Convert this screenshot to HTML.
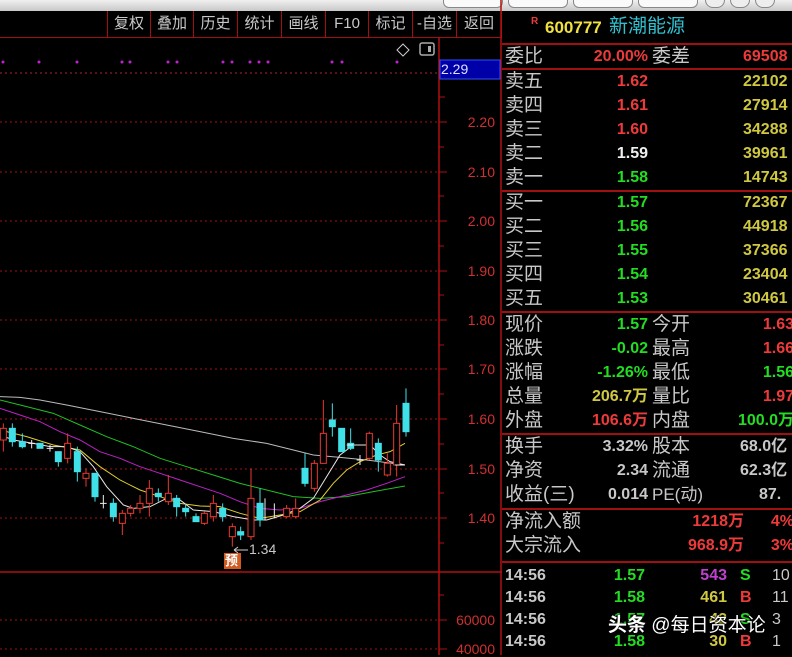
<!DOCTYPE html>
<html><head><meta charset="utf-8"><style>
*{margin:0;padding:0;box-sizing:border-box}
body{width:792px;height:655px;background:#000;position:relative;overflow:hidden;font-family:"Liberation Sans","Noto Sans CJK SC",sans-serif}
.a{position:absolute;white-space:nowrap}
.tb{position:absolute;top:11px;height:26px;border-left:1px solid #a01010;color:#c8c8c8;font-size:15px;line-height:26px;text-align:center}
.l{position:absolute;left:505px;color:#c8c8c8;font-size:19px;line-height:22px}
.l2{position:absolute;left:652px;color:#c8c8c8;font-size:19px;line-height:22px}
.v{position:absolute;font-weight:bold;font-size:16px;line-height:22px;text-align:right}
.hl{position:absolute;left:502px;width:290px;height:2px;background:#a01010}
.r{color:#ee3a3a}.g{color:#22dd22}.y{color:#d0c840}.w{color:#f0f0f0}.s{color:#c8c8c8}.m{color:#c040d0}
.ax{position:absolute;right:297px;color:#d03030;font-size:14px;text-align:right;width:50px}
</style></head><body>
<!-- top gray strip -->
<div class="a" style="left:0;top:0;width:792px;height:11px;background:linear-gradient(#f0f0f0,#c8c8c8)"></div>
<div class="a" style="left:443px;top:-8px;width:60px;height:16px;border:1px solid #888;border-radius:6px;background:#fafafa"></div>
<div class="a" style="left:508px;top:-8px;width:60px;height:16px;border:1px solid #888;border-radius:6px;background:#fafafa"></div>
<div class="a" style="left:573px;top:-8px;width:60px;height:16px;border:1px solid #888;border-radius:6px;background:#fafafa"></div>
<div class="a" style="left:638px;top:-8px;width:60px;height:16px;border:1px solid #888;border-radius:6px;background:#fafafa"></div>
<div class="a" style="left:705px;top:-8px;width:20px;height:16px;border:1px solid #888;border-radius:8px;background:#eee"></div>
<div class="a" style="left:730px;top:-8px;width:20px;height:16px;border:1px solid #888;border-radius:8px;background:#eee"></div>
<div class="a" style="left:755px;top:-8px;width:20px;height:16px;border:1px solid #888;border-radius:8px;background:#eee"></div>
<!-- toolbar -->
<div class="tb" style="left:107px;width:43px">复权</div>
<div class="tb" style="left:150px;width:43px">叠加</div>
<div class="tb" style="left:193px;width:44px">历史</div>
<div class="tb" style="left:237px;width:44px">统计</div>
<div class="tb" style="left:281px;width:44px">画线</div>
<div class="tb" style="left:325px;width:43px">F10</div>
<div class="tb" style="left:368px;width:44px">标记</div>
<div class="tb" style="left:412px;width:44px">-自选</div>
<div class="tb" style="left:456px;width:46px;border-right:1px solid #a01010">返回</div>
<div class="a" style="left:0;top:37px;width:502px;height:1px;background:#a01010"></div>
<!-- chart svg -->
<svg class="a" style="left:0;top:0" width="502" height="655">
<g fill="#c020d0"><circle cx="3" cy="62" r="1.5"/><circle cx="39" cy="62" r="1.5"/><circle cx="77" cy="62" r="1.5"/><circle cx="122" cy="62" r="1.5"/><circle cx="130" cy="62" r="1.5"/><circle cx="168" cy="62" r="1.5"/><circle cx="177" cy="62" r="1.5"/><circle cx="223" cy="62" r="1.5"/><circle cx="232" cy="62" r="1.5"/><circle cx="250" cy="62" r="1.5"/><circle cx="259" cy="62" r="1.5"/><circle cx="268" cy="62" r="1.5"/><circle cx="332" cy="62" r="1.5"/><circle cx="342" cy="62" r="1.5"/><circle cx="397" cy="62" r="1.5"/></g>
<path d="M403 44l6 6-6 6-6-6z" fill="none" stroke="#ccc"/>
<rect x="420" y="43" width="14" height="12" rx="2" fill="none" stroke="#aaa" stroke-width="1.5"/><rect x="428" y="46" width="3" height="6" fill="#aaa"/>
<g stroke-dasharray="2,3" stroke-width="1">
<line x1="0" y1="73" x2="438" y2="73" stroke="#b02040"/>
<line x1="0" y1="122" x2="438" y2="122" stroke="#a01010"/>
<line x1="0" y1="172" x2="438" y2="172" stroke="#a01010"/>
<line x1="0" y1="221" x2="438" y2="221" stroke="#a01010"/>
<line x1="0" y1="271" x2="438" y2="271" stroke="#a01010"/>
<line x1="0" y1="320" x2="438" y2="320" stroke="#a01010"/>
<line x1="0" y1="369" x2="438" y2="369" stroke="#a01010"/>
<line x1="0" y1="419" x2="438" y2="419" stroke="#a01010"/>
<line x1="0" y1="469" x2="438" y2="469" stroke="#a01010"/>
<line x1="0" y1="518" x2="438" y2="518" stroke="#a01010"/>
<line x1="0" y1="620" x2="438" y2="620" stroke="#a01010"/>
<line x1="0" y1="649" x2="438" y2="649" stroke="#a01010"/>
</g>
<line x1="439" y1="37" x2="439" y2="655" stroke="#b01010" stroke-width="1.5"/>
<line x1="0" y1="572" x2="502" y2="572" stroke="#b01010" stroke-width="1.5"/>
<line x1="501" y1="0" x2="501" y2="655" stroke="#b01010" stroke-width="1.5"/>
<g stroke="#b01010"><path d="M439 97h6M439 122h8M439 147h5M439 172h8M439 196h5M439 221h8M439 246h5M439 271h8M439 295h5M439 320h8M439 345h5M439 369h8M439 394h5M439 419h8M439 444h5M439 469h8M439 493h5M439 518h8M439 543h5M439 595h5M439 620h8M439 649h8"/></g>
<rect x="440" y="60" width="60" height="19" fill="#0000a8" stroke="#3050ff"/>
<g transform="translate(0,380) scale(0.33333)" stroke-width="3">
<g fill="none">
<polyline stroke="#bbbbbb" points="0,50 60,52 120,60 200,75 300,95 400,115 500,135 600,155 700,175 800,190 880,210 940,225 1020,232 1100,240 1215,255"/>
<polyline stroke="#20c020" points="0,60 80,80 160,100 240,135 320,170 400,200 480,235 560,260 640,285 720,310 800,330 880,350 960,355 1040,350 1120,335 1215,318"/>
<polyline stroke="#c020c8" points="0,85 60,105 120,125 180,155 240,180 300,215 360,235 420,260 480,280 540,300 600,320 660,340 720,365 780,385 840,390 900,385 960,365 1020,350 1100,330 1160,310 1215,290"/>
<polyline stroke="#e0d030" points="0,150 80,170 160,195 240,210 300,260 360,300 420,330 480,350 540,370 600,378 660,380 720,400 780,415 840,405 900,395 960,360 1000,310 1040,270 1080,245 1130,225 1170,215 1215,190"/>
<polyline stroke="#e8e8e8" points="0,165 40,180 100,190 150,200 200,200 240,215 280,260 320,320 370,375 400,385 450,380 500,355 540,360 580,390 640,395 700,410 760,420 800,420 850,405 900,385 940,355 980,290 1020,225 1060,195 1110,195 1140,225 1170,245 1215,255"/>
</g>
<!-- red candles (hollow) -->
<g stroke="#e83a30" fill="#000">
<path d="M10 130V215M203 160V250M258 265V320M367 390V465M392 375V410M420 345V400M448 300V410M505 285V375M613 395V435M640 345V425M697 430V500M753 265V480M860 375V415M887 355V415M943 240V335M970 60V250M1108 155V240M1162 220V290M1190 75V290"/>
<rect x="1" y="145" width="18" height="35"/><rect x="194" y="190" width="18" height="45"/><rect x="249" y="280" width="18" height="15"/><rect x="358" y="400" width="18" height="30"/><rect x="383" y="385" width="18" height="15"/><rect x="411" y="370" width="18" height="15"/><rect x="439" y="325" width="18" height="45"/><rect x="496" y="340" width="18" height="25"/><rect x="604" y="400" width="18" height="30"/><rect x="631" y="370" width="18" height="40"/><rect x="688" y="440" width="18" height="30"/><rect x="744" y="355" width="18" height="115"/><rect x="851" y="385" width="18" height="25"/><rect x="878" y="385" width="18" height="25"/><rect x="934" y="250" width="18" height="75"/><rect x="961" y="160" width="18" height="90"/><rect x="1099" y="160" width="18" height="75"/><rect x="1153" y="250" width="18" height="35"/><rect x="1181" y="130" width="18" height="125"/>
</g>
<!-- cyan candles -->
<g stroke="#40e0e8" fill="#40e0e8">
<path d="M37 130V200M67 160V205M175 215V260M232 200V305M285 280V365M340 355V425M475 325V365M530 345V410M557 375V410M588 400V425M668 370V425M722 440V480M780 325V440M915 220V320M997 70V170M1025 145V215M1052 145V210M1135 175V275M1218 25V170"/>
<rect x="28" y="145" width="18" height="40"/><rect x="58" y="185" width="18" height="15"/><rect x="111" y="190" width="18" height="15"/><rect x="166" y="215" width="18" height="30"/><rect x="223" y="215" width="18" height="60"/><rect x="276" y="280" width="18" height="70"/><rect x="331" y="370" width="18" height="40"/><rect x="466" y="340" width="18" height="10"/><rect x="521" y="355" width="18" height="25"/><rect x="548" y="385" width="18" height="10"/><rect x="579" y="410" width="18" height="15"/><rect x="659" y="385" width="18" height="25"/><rect x="713" y="455" width="18" height="10"/><rect x="771" y="370" width="18" height="50"/><rect x="906" y="265" width="18" height="45"/><rect x="988" y="120" width="18" height="20"/><rect x="1016" y="145" width="18" height="70"/><rect x="1043" y="190" width="18" height="15"/><rect x="1126" y="190" width="18" height="50"/><rect x="1209" y="70" width="18" height="85"/>
</g>
<g stroke="#eee"><path d="M85 190h20M95 180V205M140 205h20M150 195V215M300 370h20M310 345V385M795 355V420M823 370V415M1070 240h20M1080 225V255M1185 255h30M1040 195h20"/></g>
</g>
<path d="M234 550h14M234 550l4-3M234 550l4 3" stroke="#ccc" fill="none"/>
<rect x="224" y="553" width="17" height="16" fill="#d05a20"/>
</svg>
<div class="a" style="left:249px;top:541px;color:#c8c8c8;font-size:14px">1.34</div>
<div class="a" style="left:225px;top:553px;color:#fff;font-size:13px;line-height:16px;font-weight:bold">预</div>
<div class="a" style="left:441px;top:61px;color:#e0e0ff;font-size:14px">2.29</div>
<div class="ax" style="top:114px">2.20</div>
<div class="ax" style="top:164px">2.10</div>
<div class="ax" style="top:213px">2.00</div>
<div class="ax" style="top:263px">1.90</div>
<div class="ax" style="top:312px">1.80</div>
<div class="ax" style="top:361px">1.70</div>
<div class="ax" style="top:411px">1.60</div>
<div class="ax" style="top:461px">1.50</div>
<div class="ax" style="top:510px">1.40</div>
<div class="ax" style="top:612px;width:60px">60000</div>
<div class="ax" style="top:641px;width:60px">40000</div>
<!-- right panel -->
<div class="a" style="left:531px;top:16px;color:#ee3a3a;font-size:10px;font-weight:bold">R</div>
<div class="a" style="left:545px;top:16px;color:#f0e040;font-size:17px;font-weight:bold;line-height:24px">600777</div>
<div class="a" style="left:609px;top:15px;color:#30c0d0;font-size:19px;line-height:24px">新潮能源</div>
<div class="hl" style="top:43px"></div>
<div class="l" style="top:46px">委比</div><div class="v r" style="left:560px;top:46px;width:88px">20.00%</div>
<div class="l2" style="top:46px">委差</div><div class="v r" style="left:700px;top:46px;width:100px;text-align:left;padding-left:43px">69508</div>
<div class="hl" style="top:68px"></div>
<div class="l" style="top:71px">卖五</div><div class="v r" style="left:560px;top:71px;width:88px">1.62</div><div class="v y" style="left:743px;top:71px">22102</div>
<div class="l" style="top:95px">卖四</div><div class="v r" style="left:560px;top:95px;width:88px">1.61</div><div class="v y" style="left:743px;top:95px">27914</div>
<div class="l" style="top:119px">卖三</div><div class="v r" style="left:560px;top:119px;width:88px">1.60</div><div class="v y" style="left:743px;top:119px">34288</div>
<div class="l" style="top:143px">卖二</div><div class="v w" style="left:560px;top:143px;width:88px">1.59</div><div class="v y" style="left:743px;top:143px">39961</div>
<div class="l" style="top:167px">卖一</div><div class="v g" style="left:560px;top:167px;width:88px">1.58</div><div class="v y" style="left:743px;top:167px">14743</div>
<div class="hl" style="top:190px"></div>
<div class="l" style="top:192px">买一</div><div class="v g" style="left:560px;top:192px;width:88px">1.57</div><div class="v y" style="left:743px;top:192px">72367</div>
<div class="l" style="top:216px">买二</div><div class="v g" style="left:560px;top:216px;width:88px">1.56</div><div class="v y" style="left:743px;top:216px">44918</div>
<div class="l" style="top:240px">买三</div><div class="v g" style="left:560px;top:240px;width:88px">1.55</div><div class="v y" style="left:743px;top:240px">37366</div>
<div class="l" style="top:264px">买四</div><div class="v g" style="left:560px;top:264px;width:88px">1.54</div><div class="v y" style="left:743px;top:264px">23404</div>
<div class="l" style="top:288px">买五</div><div class="v g" style="left:560px;top:288px;width:88px">1.53</div><div class="v y" style="left:743px;top:288px">30461</div>
<div class="hl" style="top:311px"></div>
<div class="l" style="top:314px">现价</div><div class="v g" style="left:560px;top:314px;width:88px">1.57</div><div class="l2" style="top:314px">今开</div><div class="v r" style="left:740px;top:314px;width:54px">1.63</div>
<div class="l" style="top:338px">涨跌</div><div class="v g" style="left:560px;top:338px;width:88px">-0.02</div><div class="l2" style="top:338px">最高</div><div class="v r" style="left:740px;top:338px;width:54px">1.66</div>
<div class="l" style="top:362px">涨幅</div><div class="v g" style="left:560px;top:362px;width:88px">-1.26%</div><div class="l2" style="top:362px">最低</div><div class="v g" style="left:740px;top:362px;width:54px">1.56</div>
<div class="l" style="top:386px">总量</div><div class="v y" style="left:560px;top:386px;width:88px">206.7万</div><div class="l2" style="top:386px">量比</div><div class="v r" style="left:740px;top:386px;width:54px">1.97</div>
<div class="l" style="top:410px">外盘</div><div class="v r" style="left:560px;top:410px;width:88px">106.6万</div><div class="l2" style="top:410px">内盘</div><div class="v g" style="left:700px;top:410px;width:94px">100.0万</div>
<div class="hl" style="top:433px"></div>
<div class="l" style="top:436px">换手</div><div class="v s" style="left:560px;top:436px;width:88px">3.32%</div><div class="l2" style="top:436px">股本</div><div class="v s" style="left:700px;top:436px;width:100px;text-align:left;padding-left:40px">68.0亿</div>
<div class="l" style="top:460px">净资</div><div class="v s" style="left:560px;top:460px;width:88px">2.34</div><div class="l2" style="top:460px">流通</div><div class="v s" style="left:700px;top:460px;width:100px;text-align:left;padding-left:40px">62.3亿</div>
<div class="l" style="top:484px">收益(三)</div><div class="v s" style="left:560px;top:484px;width:88px">0.014</div><div class="l2" style="top:484px;font-size:17px">PE(动)</div><div class="v s" style="left:740px;top:484px;width:60px;text-align:left;padding-left:19px">87.</div>
<div class="hl" style="top:508px"></div>
<div class="l" style="top:511px">净流入额</div><div class="v r" style="left:640px;top:511px;width:104px">1218万</div><div class="v r" style="left:760px;top:511px;width:34px">4%</div>
<div class="l" style="top:535px">大宗流入</div><div class="v r" style="left:640px;top:535px;width:104px">968.9万</div><div class="v r" style="left:760px;top:535px;width:34px">3%</div>
<div class="hl" style="top:561px"></div>
<div class="v s" style="left:505px;top:565px">14:56</div><div class="v g" style="left:580px;top:565px;width:65px">1.57</div><div class="v m" style="left:660px;top:565px;width:67px">543</div><div class="v g" style="left:740px;top:565px">S</div><div class="v s" style="left:772px;top:565px;font-weight:normal">10</div>
<div class="v s" style="left:505px;top:587px">14:56</div><div class="v g" style="left:580px;top:587px;width:65px">1.58</div><div class="v y" style="left:660px;top:587px;width:67px">461</div><div class="v r" style="left:740px;top:587px">B</div><div class="v s" style="left:772px;top:587px;font-weight:normal">11</div>
<div class="v s" style="left:505px;top:609px">14:56</div><div class="v g" style="left:580px;top:609px;width:65px">1.57</div><div class="v y" style="left:660px;top:609px;width:67px">42</div><div class="v g" style="left:740px;top:609px">S</div><div class="v s" style="left:772px;top:609px;font-weight:normal">3</div>
<div class="v s" style="left:505px;top:631px">14:56</div><div class="v g" style="left:580px;top:631px;width:65px">1.58</div><div class="v y" style="left:660px;top:631px;width:67px">30</div><div class="v r" style="left:740px;top:631px">B</div><div class="v s" style="left:772px;top:631px;font-weight:normal">1</div>
<div class="a" style="left:608px;top:613px;color:#fff;font-size:19px;line-height:26px;text-shadow:0 0 2px #000,0 0 2px #000"><b>头条</b> @每日资本论</div>
</body></html>
